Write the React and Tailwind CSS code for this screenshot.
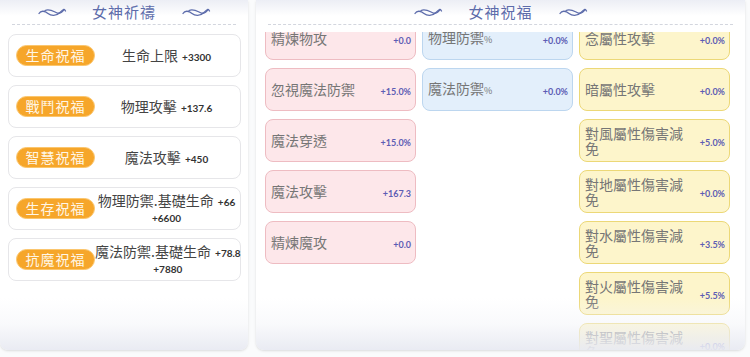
const prayers = [
  { badge: "生命祝福", label: "生命上限", value: "+3300" },
  { badge: "戰鬥祝福", label: "物理攻擊", value: "+137.6" },
  { badge: "智慧祝福", label: "魔法攻擊", value: "+450" },
  { badge: "生存祝福", label: "物理防禦.基礎生命", value: "+66", extra: "+6600" },
  { badge: "抗魔祝福", label: "魔法防禦.基礎生命", value: "+78.8", extra: "+7880" },
];

const columns = [
  {
    tone: "bg-[#fde7ea] border-[#eebcc2]",
    items: [
      ["精煉物攻", "+0.0"],
      ["忽視魔法防禦", "+15.0%"],
      ["魔法穿透", "+15.0%"],
      ["魔法攻擊", "+167.3"],
      ["精煉魔攻", "+0.0"],
    ],
  },
  {
    tone: "bg-[#e3effb] border-[#bcd6ef]",
    items: [
      ["物理防禦", "+0.0%", true],
      ["魔法防禦", "+0.0%", true],
    ],
  },
  {
    tone: "bg-[#fdf5cb] border-[#ecd877]",
    items: [
      ["念屬性攻擊", "+0.0%"],
      ["暗屬性攻擊", "+0.0%"],
      ["對風屬性傷害減免", "+5.0%"],
      ["對地屬性傷害減免", "+0.0%"],
      ["對水屬性傷害減免", "+3.5%"],
      ["對火屬性傷害減免", "+5.5%"],
      ["對聖屬性傷害減免", "+0.0%"],
    ],
  },
];

const cjk = { fontFamily: '"Noto Sans CJK TC", "Noto Sans", sans-serif' };
const num = { fontFamily: 'Lato, "Open Sans", sans-serif' };

function Swirl() {
  return (
    <svg
      width="30"
      height="12"
      viewBox="0 0 30 12"
      fill="none"
      stroke="#5d6cab"
      strokeWidth="1.3"
      strokeLinecap="round"
    >
      <path d="M2 7.5C4 4 8 5 11 7.5S19 10.5 23 6.5 27.5 3 28.5 5" />
      <path d="M8 4.5C12 2.5 16 5 19 6.5S25 7 27 3.5" />
    </svg>
  );
}

function Header({ title }) {
  return (
    <div className="absolute top-0 inset-x-0 h-[32px] bg-gradient-to-b from-[#eceef5] via-white to-white z-10">
      <div className="flex items-center justify-center gap-[25px] h-[24px]">
        <Swirl />
        <span className="text-[15px] text-[#5d6cab] tracking-[1px]" style={cjk}>
          {title}
        </span>
        <Swirl />
      </div>
      <div className="mx-[12px] border-t border-dashed border-[#d3d6de]" />
    </div>
  );
}

function Fade() {
  return (
    <div className="absolute bottom-0 inset-x-0 h-[52px] bg-gradient-to-b from-white/0 via-[#f3f4f8]/50 to-[#e8eaf2]/95 z-10 pointer-events-none" />
  );
}

function PrayerCard({ badge, label, value, extra }) {
  return (
    <div className="h-[43px] rounded-lg border border-[#e6e6e9] bg-white flex items-center pl-[7px]">
      <div
        className="w-[79px] h-[21px] shrink-0 rounded-full bg-[#f6a62a] border border-[#fbc66e] flex items-center justify-center text-[14px] text-[#fff6e6] tracking-[1px]"
        style={cjk}
      >
        {badge}
      </div>
      <div className="flex-1 flex flex-col items-center leading-[16px] pr-[2px]">
        <div className="whitespace-nowrap">
          <span className="text-[14px] text-[#444]" style={cjk}>
            {label}
          </span>{" "}
          <span className="text-[10px] font-bold text-[#333]" style={num}>
            {value}
          </span>
        </div>
        {extra && (
          <div className="text-[10px] font-bold text-[#333]" style={num}>
            {extra}
          </div>
        )}
      </div>
    </div>
  );
}

function StatCard({ tone, label, value, pct }) {
  return (
    <div className={`h-[43px] rounded-lg border-[1.5px] ${tone} flex items-center justify-between pl-[5px] pr-[4px]`}>
      <div className="w-[100px] text-[14px] leading-[15px] text-[#767676]" style={cjk}>
        {label}
        {pct && <span className="text-[9px]">%</span>}
      </div>
      <div className="text-[9px] font-bold text-[#5d5db4] mt-[4px]" style={num}>
        {value}
      </div>
    </div>
  );
}

export default function App() {
  return (
    <div className="w-[750px] h-[357px] bg-[#fafbfc] flex gap-[8px] overflow-hidden">
      <div className="relative w-[248px] h-[350px] bg-white rounded-b-lg shadow-sm overflow-hidden">
        <Header title="女神祈禱" />
        <div className="flex flex-col gap-[8px] pt-[34px] pl-[8px] pr-[7px]">
          {prayers.map((p) => (
            <PrayerCard key={p.badge} {...p} />
          ))}
        </div>
        <Fade />
      </div>
      <div className="relative w-[489px] h-[350px] bg-white rounded-b-lg shadow-sm overflow-hidden">
        <Header title="女神祝福" />
        <div className="flex gap-[6px] pt-[17px] pl-[9px]">
          {columns.map((col, i) => (
            <div key={i} className="w-[151px] flex flex-col gap-[8px]">
              {col.items.map(([label, value, pct]) => (
                <StatCard key={label} tone={col.tone} label={label} value={value} pct={pct} />
              ))}
            </div>
          ))}
        </div>
        <Fade />
      </div>
    </div>
  );
}
